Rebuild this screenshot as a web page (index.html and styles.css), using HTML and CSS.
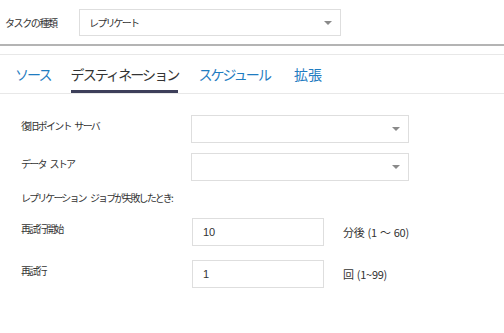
FILE: index.html
```html
<!DOCTYPE html>
<html lang="ja">
  <head>
    <meta charset="UTF-8" />
    <title>タスク設定</title>
    <link rel="stylesheet" href="styles.css">
  </head>

  <body>
    <div class="task-row">
      <label class="task-label">タスクの種類</label>
      <div class="select task-select">
        <span>レプリケート</span>
        <span class="arrow"></span>
      </div>
    </div>

    <div class="tabs">
      <a class="tab">ソース</a>
      <a class="tab active">デスティネーション</a>
      <a class="tab">スケジュール</a>
      <a class="tab">拡張</a>
    </div>

    <div class="form">
      <div class="form-row">
        <label>復旧ポイント サーバ</label>
        <div class="select wide"><span></span><span class="arrow"></span></div>
      </div>
      <div class="form-row">
        <label>データ ストア</label>
        <div class="select wide"><span></span><span class="arrow"></span></div>
      </div>

      <p class="caption">レプリケーション ジョブが失敗したとき:</p>

      <div class="form-row retry">
        <label>再試行開始</label>
        <input type="text" value="10" />
        <span class="unit">分後 (1 ～ 60)</span>
      </div>
      <div class="form-row retry">
        <label>再試行</label>
        <input type="text" value="1" />
        <span class="unit">回 (1~99)</span>
      </div>
    </div>
  </body>
</html>
```

FILE: styles.css
```css
body {
  font-family: "Noto Sans CJK JP", "Noto Sans", sans-serif;
  background-color: #ffffff;
  color: #333;
  margin: 0;
  padding: 0;
}

.task-row {
  display: flex;
  align-items: center;
  padding: 9px 0 8px 5px;
  border-bottom: 2px solid #b4b4b4;
}

.task-label {
  width: 74px;
  font-size: 10px;
  letter-spacing: -1.4px;
}

.select {
  display: flex;
  align-items: center;
  justify-content: space-between;
  box-sizing: border-box;
  height: 28px;
  padding: 0 8px 0 9px;
  border: 1px solid #dedede;
  background-color: #ffffff;
  font-size: 10px;
  letter-spacing: -1.8px;
}

.task-select {
  width: 262px;
  height: 27px;
}

.arrow {
  width: 0;
  height: 0;
  border-left: 4px solid transparent;
  border-right: 4px solid transparent;
  border-top: 4px solid #8a8a8a;
}

.tabs {
  display: flex;
  gap: 20px;
  margin-top: 8px;
  padding-left: 15px;
  border-top: 1px solid #e8e8e8;
  border-bottom: 1px solid #e8e8e8;
}

.tab {
  padding: 9px 0 6px;
  font-size: 14px;
  letter-spacing: -1.9px;
  line-height: 20px;
  color: #1f7cc1;
  border-bottom: 3px solid transparent;
}

.tab:last-child {
  margin-left: 4px;
  letter-spacing: 0;
}

.tab.active {
  color: #333;
  border-bottom-color: #3d3f5a;
}

.form {
  padding: 21px 0 0 21px;
}

.form-row {
  display: grid;
  grid-template-columns: 170px 218px;
  align-items: start;
  margin-bottom: 10px;
}

.form-row label {
  padding-top: 3px;
  font-size: 10px;
  letter-spacing: -1.7px;
  word-spacing: 3px;
}

.caption {
  margin: 0 0 13px;
  font-size: 10px;
  line-height: 14px;
  letter-spacing: -1.9px;
  word-spacing: 4px;
}

.form-row.retry {
  grid-template-columns: 171px 132px auto;
  margin-bottom: 14px;
}

input {
  box-sizing: border-box;
  width: 132px;
  height: 28px;
  padding: 0 10px;
  border: 1px solid #dedede;
  font-family: "Liberation Sans Narrow", "Liberation Sans", sans-serif;
  font-size: 11px;
  color: #333;
  outline: none;
}

.unit {
  align-self: center;
  padding-left: 19px;
  font-size: 11px;
  letter-spacing: -0.3px;
  word-spacing: 1px;
}
```
